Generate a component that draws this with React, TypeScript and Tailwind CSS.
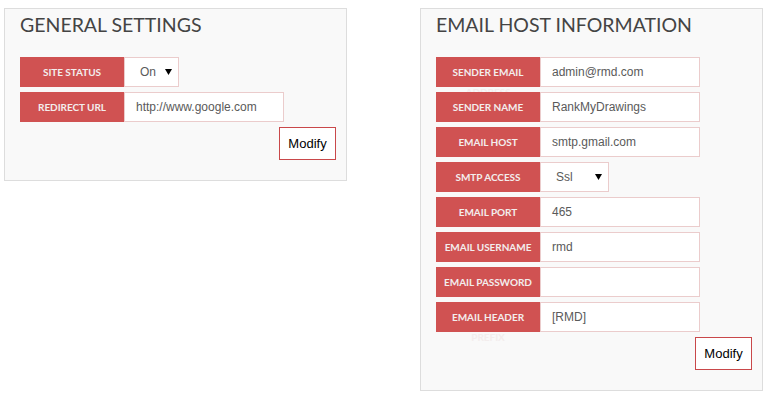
type Field = {
	label: string;
	value: string;
	select?: boolean;
	width: string;
};

const generalFields: Field[] = [
	{ label: "Site Status", value: "On", select: true, width: "w-[55px]" },
	{ label: "Redirect URL", value: "http://www.google.com", width: "w-[160px]" },
];

const emailFields: Field[] = [
	{ label: "Sender Email Address", value: "admin@rmd.com", width: "w-[160px]" },
	{ label: "Sender Name", value: "RankMyDrawings", width: "w-[160px]" },
	{ label: "Email Host", value: "smtp.gmail.com", width: "w-[160px]" },
	{ label: "SMTP Access", value: "Ssl", select: true, width: "w-[69px]" },
	{ label: "Email Port", value: "465", width: "w-[160px]" },
	{ label: "Email Username", value: "rmd", width: "w-[160px]" },
	{ label: "Email Password", value: "", width: "w-[160px]" },
	{ label: "Email Header Prefix", value: "[RMD]", width: "w-[160px]" },
];

const Arrow = () => (
	<svg width="7" height="6" viewBox="0 0 7 6" className="shrink-0">
		<path d="M0 0 H7 L3.5 6 Z" fill="#000" />
	</svg>
);

const Row = ({ field }: { field: Field }) => (
	<div className="flex">
		<div className="relative w-[104px] h-[30px] shrink-0 bg-[#d05252] pt-[5px] text-center font-['Lato',sans-serif] font-bold text-[10px] leading-5 uppercase text-[#f3eded] tracking-[-0.05px]">
			{field.label}
		</div>
		{field.select ? (
			<div
				className={`${field.width} h-[30px] bg-white border border-[#ebcccc] flex items-center justify-between pl-[15px] pr-[6px] font-['Liberation_Sans',Arial,sans-serif] text-[12px] text-[#5a5a5a]`}
			>
				<span>{field.value}</span>
				<Arrow />
			</div>
		) : (
			<div
				className={`${field.width} h-[30px] bg-white border border-[#ebcccc] flex items-center pl-[11px] font-['Liberation_Sans',Arial,sans-serif] text-[12px] text-[#5a5a5a]`}
			>
				{field.value}
			</div>
		)}
	</div>
);

const Panel = ({ title, fields }: { title: string; fields: Field[] }) => (
	<div className="w-[343px] shrink-0 border border-[#ddd] bg-[#f9f9f9] pt-1 pl-[15px] pr-[10px] pb-5">
		<h2 className="font-['Lato',sans-serif] text-[19.5px] leading-6 text-[#444] uppercase">
			{title}
		</h2>
		<div className="mt-5 flex flex-col gap-[5px]">
			{fields.map((f) => (
				<Row key={f.label} field={f} />
			))}
		</div>
		<div className="mt-[5px] flex justify-end">
			<button className="w-[57px] h-[33px] border border-[#c9484a] bg-white font-['Liberation_Sans',Arial,sans-serif] text-[13px] text-black">
				Modify
			</button>
		</div>
	</div>
);

export default function App() {
	return (
		<div className="w-[769px] h-[404px] bg-white flex items-start gap-[73px] pl-1 pt-2">
			<Panel title="General Settings" fields={generalFields} />
			<Panel title="Email Host Information" fields={emailFields} />
		</div>
	);
}
